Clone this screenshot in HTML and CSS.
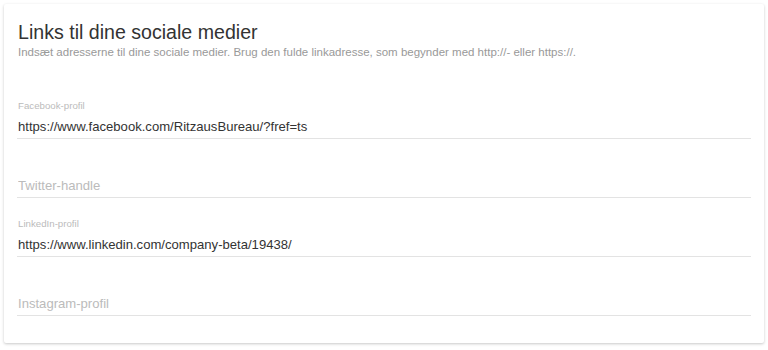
FILE: index.html
```html
<!DOCTYPE html>
<html lang="da">
<head>
    <meta charset="UTF-8">
    <meta name="viewport" content="width=device-width, initial-scale=1.0">
    <title>Sociale medier</title>
    <link rel="stylesheet" href="styles.css">
</head>
<body>
    <section class="card">
        <h1 class="card-title">Links til dine sociale medier</h1>
        <p class="card-subtitle">Indsæt adresserne til dine sociale medier. Brug den fulde linkadresse, som begynder med http://- eller https://.</p>

        <form class="social-form">
            <div class="field">
                <label class="field-label" for="facebook">Facebook-profil</label>
                <input class="field-input" type="text" id="facebook" value="https://www.facebook.com/RitzausBureau/?fref=ts">
            </div>
            <div class="field">
                <input class="field-input" type="text" id="twitter" placeholder="Twitter-handle">
            </div>
            <div class="field">
                <label class="field-label" for="linkedin">LinkedIn-profil</label>
                <input class="field-input" type="text" id="linkedin" value="https://www.linkedin.com/company-beta/19438/">
            </div>
            <div class="field">
                <input class="field-input" type="text" id="instagram" placeholder="Instagram-profil">
            </div>
        </form>
    </section>
</body>
</html>
```

FILE: styles.css
```css
body {
    font-family: "Liberation Sans", Arial, sans-serif;
    margin: 0;
    padding: 4px;
    background-color: #fff;
}

.card {
    background-color: #fff;
    border-radius: 2px;
    box-shadow: 0 1px 3px rgba(0, 0, 0, 0.22);
    padding: 16px 13px 27px 13px;
}

.card-title {
    font-size: 19.6px;
    font-weight: normal;
    line-height: 24px;
    color: #333;
    margin: 0 0 1px 1px;
}

.card-subtitle {
    font-size: 11.5px;
    line-height: 14px;
    color: #999;
    margin: 0 0 21px 1px;
}

.field {
    display: flex;
    flex-direction: column;
    justify-content: flex-end;
    height: 59px;
    box-sizing: border-box;
    border-bottom: 1px solid #e3e3e3;
}

.field-label {
    font-size: 9.7px;
    line-height: 12px;
    color: #bbb;
    margin: 0 0 5px 1px;
}

.field-input {
    font-family: "Liberation Sans", Arial, sans-serif;
    font-size: 13.1px;
    line-height: 20px;
    height: 20px;
    color: #333;
    border: none;
    outline: none;
    padding: 0 0 1px 1px;
    margin: 0;
    background: transparent;
}

.field-input::placeholder {
    color: #bbb;
}
```
